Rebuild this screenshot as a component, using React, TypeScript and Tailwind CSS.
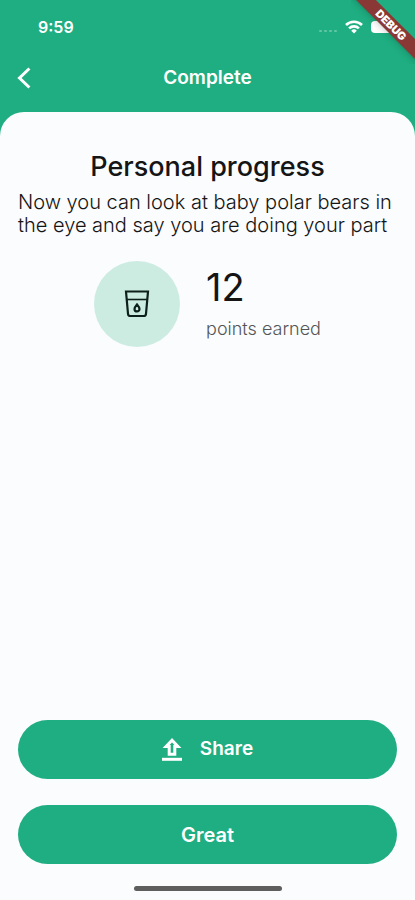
import React from 'react';

const WifiIcon: React.FC = () => (
  <svg className="w-[18px] h-[14px]" viewBox="0 0 18 14" fill="none" stroke="currentColor" strokeWidth="2.6" aria-hidden="true">
    <path d="M1 5a11.400 11.400 0 0 1 16 0" />
    <path d="M4.100 8.400a7 7 0 0 1 9.800 0" />
    <path d="M9 13.600l-2.800-2.900a4 4 0 0 1 5.600 0z" fill="currentColor" stroke="none" />
  </svg>
);

const CupIcon: React.FC = () => (
  <svg className="w-[26px] h-[28px] text-[#0d1f1a]" viewBox="0 0 26 28" fill="none" stroke="currentColor" strokeWidth="2.2" aria-hidden="true">
    <path d="M2 1.500h22l-2 22.200a2.400 2.400 0 0 1-2.400 2.300H6.400A2.400 2.400 0 0 1 4 23.700z" />
    <path d="M3 9.500h20" strokeWidth="1.6" />
    <path d="M13 14.400c1.600 1.900 2.500 3.300 2.500 4.500a2.500 2.500 0 0 1-5 0c0-1.200.900-2.600 2.500-4.500z" />
  </svg>
);

const UploadIcon: React.FC = () => (
  <svg className="w-5 h-6" viewBox="0 0 20 24" fill="none" stroke="currentColor" aria-hidden="true">
    <path d="M10 2.200L4 8.600h3.200v7.600h5.600V8.600H16z" strokeWidth="3" />
    <path d="M0 21.300h20" strokeWidth="3" />
  </svg>
);

const DebugBanner: React.FC = () => (
  <div className="absolute top-0 right-0 w-16 h-16 overflow-hidden">
    <div className="absolute top-[18px] -left-6 w-32 h-[14px] rotate-45 bg-[#8a3835] shadow-md text-center text-[11px] leading-[14px] font-black text-white">
      DEBUG
    </div>
  </div>
);

const App: React.FC = () => {
  return (
    <div className="relative min-h-screen flex flex-col bg-[#1fae81] font-['Inter',sans-serif] text-[#151515]">
      <header className="text-white">
        <div className="flex items-center justify-between pt-[15px] pl-[38px] pr-[18px]">
          <span className="text-[16px] leading-6 font-semibold">9:59</span>
          <div className="flex items-center gap-2">
            <div className="flex gap-[2px] pt-2 opacity-30">
              {[1, 2, 3, 4].map((i) => (
                <span key={i} className="w-[3px] h-[2px] rounded-full bg-white" />
              ))}
            </div>
            <WifiIcon />
            <span className="w-[26px] h-3 rounded-sm bg-white" />
          </div>
        </div>
        <div className="grid grid-cols-[1fr_auto_1fr] items-center h-[73px] px-4 pt-1">
          <button type="button" aria-label="Back" className="w-4 h-6">
            <svg className="w-4 h-6" viewBox="0 0 16 24" fill="none" stroke="currentColor" strokeWidth="3" aria-hidden="true">
              <path d="M13.400 2.500L3.500 12l9.900 9.500" />
            </svg>
          </button>
          <h1 className="text-[19px] leading-6 font-semibold">Complete</h1>
        </div>
      </header>
      <DebugBanner />

      <main className="flex-1 flex flex-col rounded-t-3xl bg-[#fafcfe] px-[18px] pt-[37px]">
        <h2 className="text-center text-[27px] leading-9 font-medium">Personal progress</h2>
        <p className="mt-[6px] text-[20px] leading-[23px] font-light">
          Now you can look at baby polar bears in the eye and say you are doing your part
        </p>

        <div className="mt-6 flex items-center justify-center gap-[26px]">
          <div className="flex items-center justify-center w-[86px] h-[86px] rounded-full bg-[#cdece1]">
            <CupIcon />
          </div>
          <div>
            <p className="text-[38px] leading-10">12</p>
            <p className="mt-[10px] text-[18px] leading-6 font-light text-[#555]">points earned</p>
          </div>
        </div>

        <div className="mt-auto flex flex-col gap-[26px]">
          <button type="button" className="flex items-center justify-center gap-[18px] h-[59px] rounded-full bg-[#1fae81] text-white text-[19px] font-semibold">
            <UploadIcon />
            Share
          </button>
          <button type="button" className="h-[59px] rounded-full bg-[#1fae81] text-white text-[20px] font-semibold">
            Great
          </button>
        </div>
        <div className="mt-[22px] mb-[9px] self-center w-[148px] h-[5px] rounded-full bg-[#5e5e5e]" />
      </main>
    </div>
  );
};

export default App;
